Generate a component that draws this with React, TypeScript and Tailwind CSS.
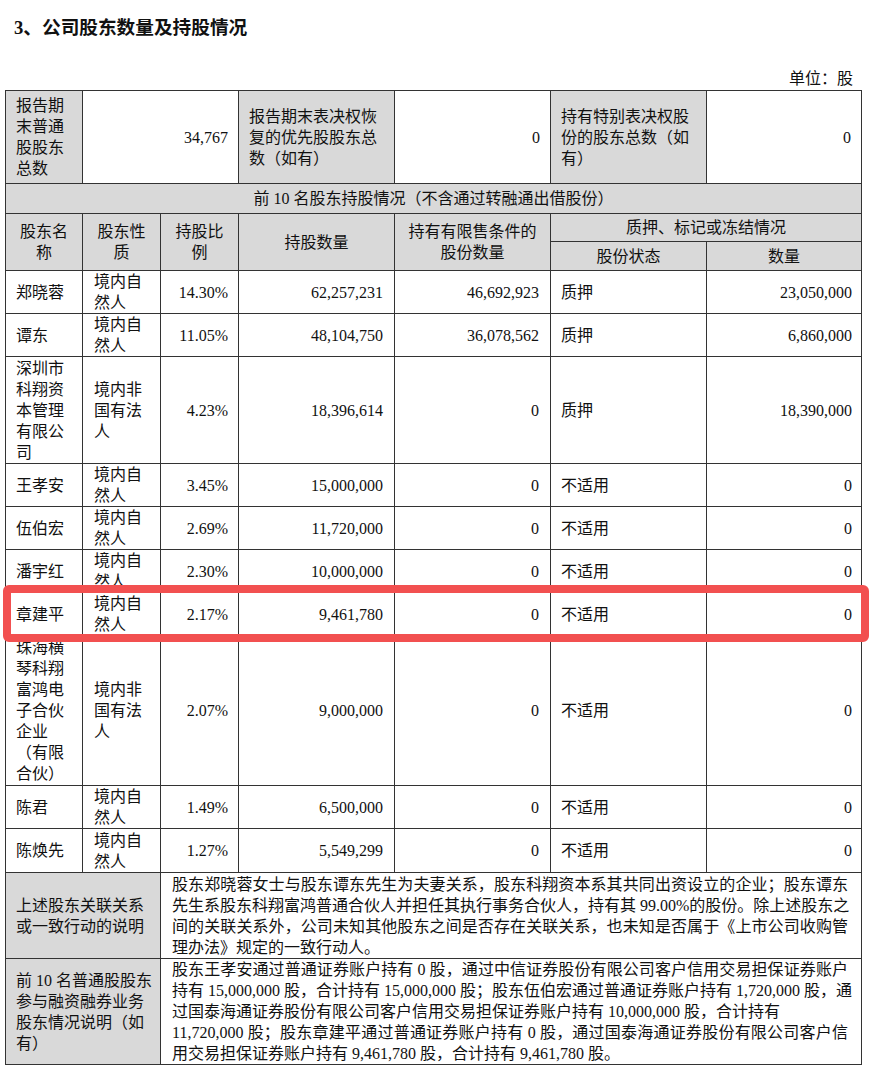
import React from "react";

const font = "font-['Liberation_Serif','Noto_Sans_CJK_SC',serif]";

type Row = {
  name: string;
  kind: string;
  pct: string;
  qty: string;
  limited: string;
  status: string;
  amount: string;
  h: string;
};

const rows: Row[] = [
  { name: "郑晓蓉", kind: "境内自然人", pct: "14.30%", qty: "62,257,231", limited: "46,692,923", status: "质押", amount: "23,050,000", h: "h-[43px]" },
  { name: "谭东", kind: "境内自然人", pct: "11.05%", qty: "48,104,750", limited: "36,078,562", status: "质押", amount: "6,860,000", h: "h-[43px]" },
  { name: "深圳市科翔资本管理有限公司", kind: "境内非国有法人", pct: "4.23%", qty: "18,396,614", limited: "0", status: "质押", amount: "18,390,000", h: "h-[107px]" },
  { name: "王孝安", kind: "境内自然人", pct: "3.45%", qty: "15,000,000", limited: "0", status: "不适用", amount: "0", h: "h-[43px]" },
  { name: "伍伯宏", kind: "境内自然人", pct: "2.69%", qty: "11,720,000", limited: "0", status: "不适用", amount: "0", h: "h-[43px]" },
  { name: "潘宇红", kind: "境内自然人", pct: "2.30%", qty: "10,000,000", limited: "0", status: "不适用", amount: "0", h: "h-[43px]" },
  { name: "章建平", kind: "境内自然人", pct: "2.17%", qty: "9,461,780", limited: "0", status: "不适用", amount: "0", h: "h-[43px]" },
  { name: "珠海横琴科翔富鸿电子合伙企业（有限合伙）", kind: "境内非国有法人", pct: "2.07%", qty: "9,000,000", limited: "0", status: "不适用", amount: "0", h: "h-[150px]" },
  { name: "陈君", kind: "境内自然人", pct: "1.49%", qty: "6,500,000", limited: "0", status: "不适用", amount: "0", h: "h-[43px]" },
  { name: "陈焕先", kind: "境内自然人", pct: "1.27%", qty: "5,549,299", limited: "0", status: "不适用", amount: "0", h: "h-[44px]" },
];

const relationLines = [
  "股东郑晓蓉女士与股东谭东先生为夫妻关系，股东科翔资本系其共同出资设立的企业；股东谭东",
  "先生系股东科翔富鸿普通合伙人并担任其执行事务合伙人，持有其 99.00%的股份。除上述股东之",
  "间的关联关系外，公司未知其他股东之间是否存在关联关系，也未知是否属于《上市公司收购管",
  "理办法》规定的一致行动人。",
];

const marginLines = [
  { t: "股东王孝安通过普通证券账户持有 0 股，通过中信证券股份有限公司客户信用交易担保证券账户", j: true },
  { t: "持有 15,000,000 股，合计持有 15,000,000 股；股东伍伯宏通过普通证券账户持有 1,720,000 股，通", j: true },
  { t: "过国泰海通证券股份有限公司客户信用交易担保证券账户持有 10,000,000 股，合计持有", j: false },
  { t: "11,720,000 股；股东章建平通过普通证券账户持有 0 股，通过国泰海通证券股份有限公司客户信", j: true },
  { t: "用交易担保证券账户持有 9,461,780 股，合计持有 9,461,780 股。", j: false },
];

const cell = "border border-[#333] leading-[21px] align-middle";
const grey = "bg-[#d9d9d9]";

const Line = ({ text, justify }: { text: string; justify: boolean }) => (
  <div className={justify ? "whitespace-nowrap text-justify [text-align-last:justify]" : "whitespace-nowrap"}>
    {text}
  </div>
);

export default function App() {
  return (
    <div className={`${font} w-[886px] min-h-[1078px] bg-white text-[16px] text-[#111]`}>
      <div className="pl-[14px] pt-[15px] h-[41px] text-[18.67px] leading-[26px] font-bold">
        3、公司股东数量及持股情况
      </div>
      <div className="mt-[27px] w-[861px] h-[21px] leading-[21px] pr-[8px] text-right">单位：股</div>

      <div className="relative mt-[1px] ml-[5px] w-[856px]">
        <table className="w-[856px] table-fixed border-collapse">
          <colgroup>
            <col className="w-[77px]" />
            <col className="w-[78px]" />
            <col className="w-[78px]" />
            <col className="w-[156px]" />
            <col className="w-[156px]" />
            <col className="w-[156px]" />
            <col className="w-[155px]" />
          </colgroup>
          <tbody>
            <tr className="h-[93px]">
              <td className={`${cell} ${grey} pl-[10px] pr-[6px]`}>报告期末普通股股东总数</td>
              <td colSpan={2} className={`${cell} pr-[10px] text-right`}>34,767</td>
              <td className={`${cell} ${grey} px-[10px]`}>报告期末表决权恢复的优先股股东总数（如有）</td>
              <td className={`${cell} pr-[10px] text-right`}>0</td>
              <td className={`${cell} ${grey} px-[10px]`}>持有特别表决权股份的股东总数（如有）</td>
              <td className={`${cell} pr-[10px] text-right`}>0</td>
            </tr>
            <tr className="h-[30px]">
              <td colSpan={7} className={`${cell} ${grey} text-center`}>
                前 10 名股东持股情况（不含通过转融通出借股份）
              </td>
            </tr>
            <tr className="h-[28px]">
              <td rowSpan={2} className={`${cell} ${grey} px-[7px] text-center`}>股东名称</td>
              <td rowSpan={2} className={`${cell} ${grey} px-[7px] text-center`}>股东性质</td>
              <td rowSpan={2} className={`${cell} ${grey} px-[7px] text-center`}>持股比例</td>
              <td rowSpan={2} className={`${cell} ${grey} px-[10px] text-center`}>持股数量</td>
              <td rowSpan={2} className={`${cell} ${grey} px-[10px] text-center`}>持有有限售条件的股份数量</td>
              <td colSpan={2} className={`${cell} ${grey} text-center`}>质押、标记或冻结情况</td>
            </tr>
            <tr className="h-[29px]">
              <td className={`${cell} ${grey} text-center`}>股份状态</td>
              <td className={`${cell} ${grey} text-center`}>数量</td>
            </tr>
            {rows.map((r) => (
              <tr key={r.name} className={r.h}>
                <td className={`${cell} pl-[10px] pr-[6px]`}>{r.name}</td>
                <td className={`${cell} pl-[11px] pr-[6px]`}>{r.kind}</td>
                <td className={`${cell} pr-[10px] text-right`}>{r.pct}</td>
                <td className={`${cell} pr-[11px] text-right`}>{r.qty}</td>
                <td className={`${cell} pr-[11px] text-right`}>{r.limited}</td>
                <td className={`${cell} pl-[10px]`}>{r.status}</td>
                <td className={`${cell} pr-[9px] text-right`}>{r.amount}</td>
              </tr>
            ))}
            <tr className="h-[86px]">
              <td colSpan={2} className={`${cell} ${grey} pl-[10px]`}>
                <div className="whitespace-nowrap">上述股东关联关系</div>
                <div className="whitespace-nowrap">或一致行动的说明</div>
              </td>
              <td colSpan={5} className={`${cell} pl-[11px] pr-[13px]`}>
                {relationLines.map((t, i) => (
                  <Line key={i} text={t} justify={i < relationLines.length - 1} />
                ))}
              </td>
            </tr>
            <tr className="h-[106px]">
              <td colSpan={2} className={`${cell} ${grey} pl-[10px]`}>
                <div className="whitespace-nowrap">前 10 名普通股股东</div>
                <div className="whitespace-nowrap">参与融资融券业务</div>
                <div className="whitespace-nowrap">股东情况说明（如</div>
                <div className="whitespace-nowrap">有）</div>
              </td>
              <td colSpan={5} className={`${cell} pl-[11px] pr-[13px]`}>
                {marginLines.map((l, i) => (
                  <Line key={i} text={l.t} justify={l.j} />
                ))}
              </td>
            </tr>
          </tbody>
        </table>

        <div className="pointer-events-none absolute left-[-2px] top-[495px] h-[57px] w-[866px] rounded-[6px] border-[8px] border-[#f25050]" />
      </div>
    </div>
  );
}
